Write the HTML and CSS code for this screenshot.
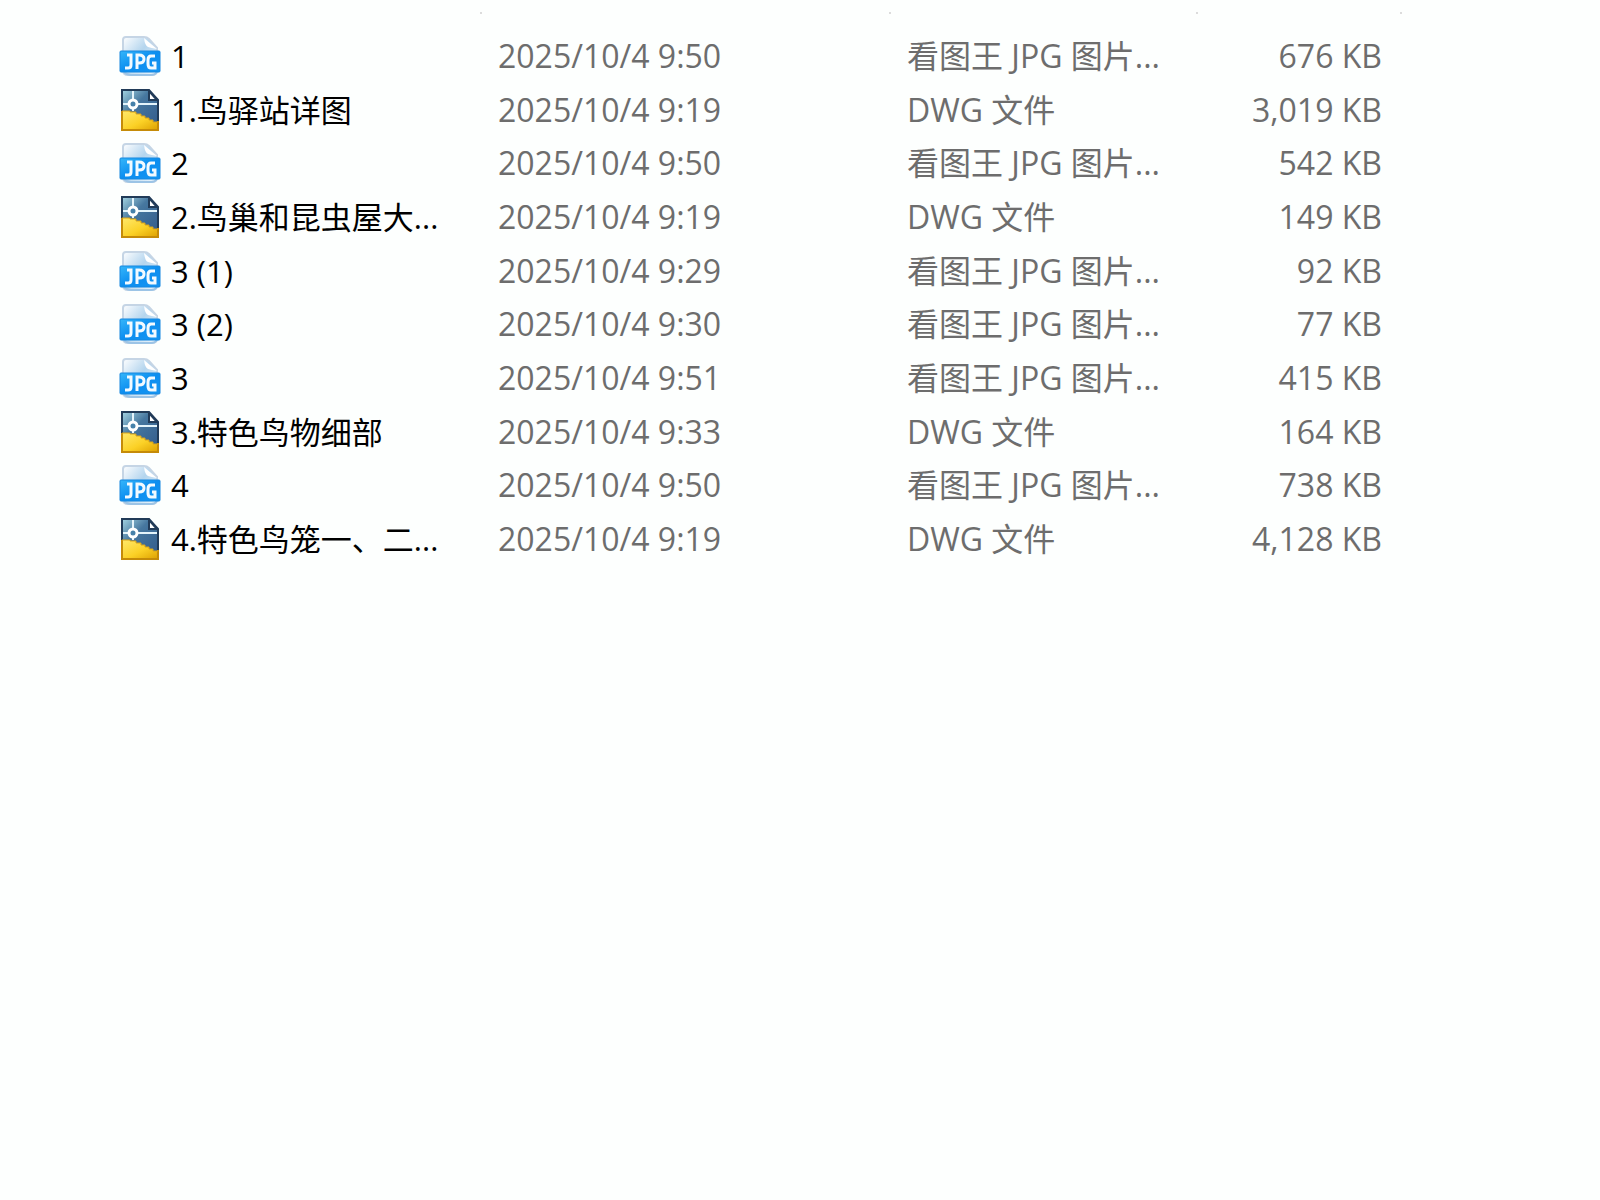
FILE: index.html
```html
<!DOCTYPE html>
<html lang="zh-CN">
<head>
<meta charset="utf-8">
<title>文件列表</title>
<link rel="stylesheet" href="styles.css">
</head>
<body>
<svg class="defs" aria-hidden="true">
  <defs>
    <linearGradient id="paper" x1="0" y1="0" x2="1" y2="1"><stop offset="0" stop-color="#fff"/><stop offset=".45" stop-color="#b4d5ee"/><stop offset="1" stop-color="#eef7fd"/></linearGradient>
    <linearGradient id="band" x1="0" y1="0" x2="1" y2="1"><stop offset="0" stop-color="#35b6fa"/><stop offset=".5" stop-color="#0c8ef0"/><stop offset="1" stop-color="#1595f2"/></linearGradient>
    <linearGradient id="sky" x1="0" y1="0" x2="1" y2="1"><stop offset="0" stop-color="#a5d5e2"/><stop offset=".4" stop-color="#46779f"/><stop offset="1" stop-color="#335c8c"/></linearGradient>
    <linearGradient id="gold" x1="0" y1="0" x2="1" y2="1"><stop offset="0" stop-color="#ffe96c"/><stop offset=".55" stop-color="#fbd126"/><stop offset="1" stop-color="#dda000"/></linearGradient>
    <symbol id="jpg" viewBox="0 0 42 42">
      <path d="M4 17V5q0-3 3-3h18q3 0 5 2l8 9v22q0 5-5 5H9q-5 0-5-5z" fill="url(#paper)" stroke="#c5d5e5" stroke-width="2"/>
      <path d="M25 3q1 8 4 9t9 2z" fill="#fff"/>
      <path d="M5 37q3 3 7 3h20q4 0 6-3" fill="none" stroke="#9cc4e6" stroke-width="2"/>
      <rect x="1" y="16" width="40" height="21" rx="1" fill="url(#band)" stroke="#1687df"/>
      <path d="M8 20h4v10q0 3-3 3H6M18 34V20h2q5 0 5 4t-5 4h-2M36 21h-4q-3 0-3 4v4q0 4 3 4h4v-5h-3" fill="none" stroke="#f2faff" stroke-width="3"/>
    </symbol>
    <symbol id="dwg" viewBox="0 0 38 42">
      <path d="M1 1h27l9 10v25L1 22z" fill="url(#sky)"/>
      <path d="M1 22V1h27l9 10v24" fill="none" stroke="#213b58" stroke-width="2"/>
      <path d="M28 2v9h8z" fill="#fff" stroke="#213b58" stroke-width="2"/>
      <path d="M12 2v20M2 15h34" stroke="#e4f4fb" stroke-width="2"/>
      <circle cx="12" cy="15" r="4" fill="#4681aa" stroke="#fff" stroke-width="3"/>
      <path d="M1 22h8v1h6v2h5v2h4v2h4v2h4v2h5v8H1z" fill="url(#gold)"/>
      <path d="M1 22v19h36V32" fill="none" stroke="#c58b08" stroke-width="2"/>
      <path d="M1 22h8v1h6v2h5v2h4v2h4v2h4v2h5" fill="none" stroke="#d9a319"/>
    </symbol>
  </defs>
</svg>
<main class="panel">
  <div class="header" aria-hidden="true"><i></i><i></i><i></i><i></i></div>
  <table class="files">
    <colgroup><col class="name"><col class="date"><col class="type"><col class="size"></colgroup>
    <tbody>
      <tr><td><span class="file"><svg class="icon"><use href="#jpg"/></svg>1</span></td><td>2025/10/4 9:50</td><td>看图王 JPG 图片...</td><td>676 KB</td></tr>
      <tr><td><span class="file"><svg class="icon"><use href="#dwg"/></svg>1.鸟驿站详图</span></td><td>2025/10/4 9:19</td><td>DWG 文件</td><td>3,019 KB</td></tr>
      <tr><td><span class="file"><svg class="icon"><use href="#jpg"/></svg>2</span></td><td>2025/10/4 9:50</td><td>看图王 JPG 图片...</td><td>542 KB</td></tr>
      <tr><td><span class="file"><svg class="icon"><use href="#dwg"/></svg>2.鸟巢和昆虫屋大...</span></td><td>2025/10/4 9:19</td><td>DWG 文件</td><td>149 KB</td></tr>
      <tr><td><span class="file"><svg class="icon"><use href="#jpg"/></svg>3 (1)</span></td><td>2025/10/4 9:29</td><td>看图王 JPG 图片...</td><td>92 KB</td></tr>
      <tr><td><span class="file"><svg class="icon"><use href="#jpg"/></svg>3 (2)</span></td><td>2025/10/4 9:30</td><td>看图王 JPG 图片...</td><td>77 KB</td></tr>
      <tr><td><span class="file"><svg class="icon"><use href="#jpg"/></svg>3</span></td><td>2025/10/4 9:51</td><td>看图王 JPG 图片...</td><td>415 KB</td></tr>
      <tr><td><span class="file"><svg class="icon"><use href="#dwg"/></svg>3.特色鸟物细部</span></td><td>2025/10/4 9:33</td><td>DWG 文件</td><td>164 KB</td></tr>
      <tr><td><span class="file"><svg class="icon"><use href="#jpg"/></svg>4</span></td><td>2025/10/4 9:50</td><td>看图王 JPG 图片...</td><td>738 KB</td></tr>
      <tr><td><span class="file"><svg class="icon"><use href="#dwg"/></svg>4.特色鸟笼一、二...</span></td><td>2025/10/4 9:19</td><td>DWG 文件</td><td>4,128 KB</td></tr>
    </tbody>
  </table>
</main>
</body>
</html>
```

FILE: styles.css
```css
body {
  margin: 0;
  min-height: 100vh;
  background: #fdfffe;
  color: #000;
  font: 32px/40px "Open Sans", "Noto Sans CJK SC", sans-serif;
}

.defs {
  position: absolute;
  width: 0;
  height: 0;
}

.panel {
  padding: 12px 200px 36px 82px;
}

.header {
  display: grid;
  grid-template-columns: 400px 409px 307px 204px;
  height: 17px;
}

.header i {
  width: 2px;
  height: 2px;
  justify-self: end;
  background: #dcdcdc;
}

.files {
  width: 100%;
  height: 537px;
  table-layout: fixed;
  border-collapse: collapse;
}

.name { width: 400px; }
.date { width: 409px; }
.type { width: 307px; }

td {
  padding: 0 0 0 16px;
  color: #6d6d6d;
  white-space: nowrap;
}

td:first-child {
  padding-left: 37px;
  color: #000;
  font-size: 31px;
}

td:last-child {
  padding: 0 18px 0 0;
  text-align: right;
}

.file {
  display: flex;
  align-items: center;
  gap: 10px;
}

.icon {
  flex: none;
  width: 42px;
  height: 42px;
}
```
